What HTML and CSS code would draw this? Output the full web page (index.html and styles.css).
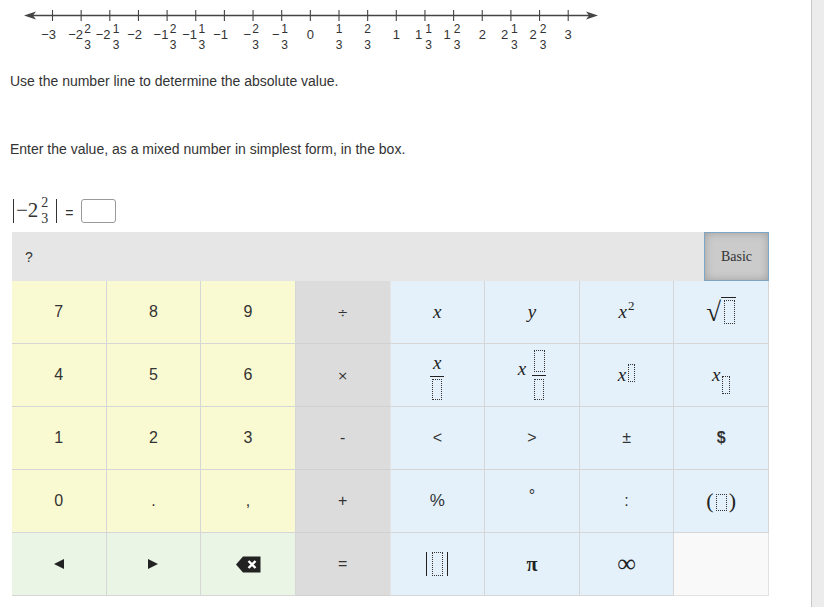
FILE: index.html
```html
<!DOCTYPE html>
<html>
<head>
<meta charset="utf-8">
<link rel="stylesheet" href="styles.css">
</head>
<body>
<div class="page">
  <div class="main">
    <svg class="nl" width="620" height="56" viewBox="0 0 620 56">
      <line class="ax" x1="30" y1="15.5" x2="592" y2="15.5"/>
      <path class="ah" d="M24 15.5 L36 11.5 L33 15.5 L36 19.5 Z"/>
      <path class="ah" d="M598 15.5 L586 11.5 L589 15.5 L586 19.5 Z"/>
      <g class="tk">
        <line x1="52.5" y1="10" x2="52.5" y2="21"/>
        <line x1="81.15" y1="10" x2="81.15" y2="21"/>
        <line x1="109.8" y1="10" x2="109.8" y2="21"/>
        <line x1="138.45" y1="10" x2="138.45" y2="21"/>
        <line x1="167.1" y1="10" x2="167.1" y2="21"/>
        <line x1="195.75" y1="10" x2="195.75" y2="21"/>
        <line x1="224.4" y1="10" x2="224.4" y2="21"/>
        <line x1="253.05" y1="10" x2="253.05" y2="21"/>
        <line x1="281.7" y1="10" x2="281.7" y2="21"/>
        <line x1="310.35" y1="10" x2="310.35" y2="21"/>
        <line x1="339" y1="10" x2="339" y2="21"/>
        <line x1="367.65" y1="10" x2="367.65" y2="21"/>
        <line x1="396.3" y1="10" x2="396.3" y2="21"/>
        <line x1="424.95" y1="10" x2="424.95" y2="21"/>
        <line x1="453.6" y1="10" x2="453.6" y2="21"/>
        <line x1="482.25" y1="10" x2="482.25" y2="21"/>
        <line x1="510.9" y1="10" x2="510.9" y2="21"/>
        <line x1="539.55" y1="10" x2="539.55" y2="21"/>
        <line x1="568.2" y1="10" x2="568.2" y2="21"/>
      </g>
      <g class="lb">
        <text class="i e" x="56" y="38.5">−3</text>

        <text class="i e" x="83" y="38.5">−2</text>
        <text class="f m" x="87.7" y="33">2</text><text class="f m" x="87.7" y="48.5">3</text>

        <text class="i e" x="110.6" y="38.5">−2</text>
        <text class="f m" x="116.1" y="33">1</text><text class="f m" x="116.1" y="48.5">3</text>

        <text class="i e" x="142" y="38.5">−2</text>

        <text class="i e" x="168.4" y="38.5">−1</text>
        <text class="f m" x="173.1" y="33">2</text><text class="f m" x="173.1" y="48.5">3</text>

        <text class="i e" x="197.1" y="38.5">−1</text>
        <text class="f m" x="201.8" y="33">1</text><text class="f m" x="201.8" y="48.5">3</text>

        <text class="i e" x="228" y="38.5">−1</text>

        <text class="i e" x="251" y="38.5">−</text>
        <text class="f m" x="255.5" y="33">2</text><text class="f m" x="255.5" y="48.5">3</text>

        <text class="i e" x="279.7" y="38.5">−</text>
        <text class="f m" x="284.7" y="33">1</text><text class="f m" x="284.7" y="48.5">3</text>

        <text class="i m" x="310.35" y="38.5">0</text>

        <text class="f m" x="339" y="33">1</text><text class="f m" x="339" y="48.5">3</text>

        <text class="f m" x="367.65" y="33">2</text><text class="f m" x="367.65" y="48.5">3</text>

        <text class="i m" x="396.3" y="38.5">1</text>

        <text class="i e" x="422.3" y="38.5">1</text>
        <text class="f m" x="428.5" y="33">1</text><text class="f m" x="428.5" y="48.5">3</text>

        <text class="i e" x="450.8" y="38.5">1</text>
        <text class="f m" x="457" y="33">2</text><text class="f m" x="457" y="48.5">3</text>

        <text class="i m" x="482.25" y="38.5">2</text>

        <text class="i e" x="508.2" y="38.5">2</text>
        <text class="f m" x="514.4" y="33">1</text><text class="f m" x="514.4" y="48.5">3</text>

        <text class="i e" x="536.8" y="38.5">2</text>
        <text class="f m" x="543" y="33">2</text><text class="f m" x="543" y="48.5">3</text>

        <text class="i m" x="568.2" y="38.5">3</text>
      </g>
    </svg>

    <p class="q q1">Use the number line to determine the absolute value.</p>
    <p class="q q2">Enter the value, as a mixed number in simplest form, in the box.</p>

    <div class="expr">
      <span class="absbar"></span>
      <span class="mn">−2</span>
      <span class="efrac"><span>2</span><span>3</span></span>
      <span class="absbar absbar-r"></span>
      <span class="eq">=</span>
      <span class="ansbox"></span>
    </div>

    <div class="pad">
      <div class="padhead">
        <span class="help">?</span>
        <span class="basic">Basic</span>
      </div>
      <div class="keys">
        <div class="k y">7</div>
        <div class="k y">8</div>
        <div class="k y">9</div>
        <div class="k g op">÷</div>
        <div class="k b"><span class="mi">x</span></div>
        <div class="k b"><span class="mi">y</span></div>
        <div class="k b"><span class="mi">x</span><span class="sup2">2</span></div>
        <div class="k b"><span class="sqrt">√</span><span class="rad"><span class="ph ph-sq"></span></span></div>

        <div class="k y">4</div>
        <div class="k y">5</div>
        <div class="k y">6</div>
        <div class="k g op">×</div>
        <div class="k b"><span class="kfrac"><span class="mi kfx">x</span><span class="fbar fbar-a"></span><span class="ph ph-fd"></span></span></div>
        <div class="k b"><span class="mi mix">x</span><span class="kfrac"><span class="ph ph-fu"></span><span class="fbar fbar-b"></span><span class="ph ph-fd"></span></span></div>
        <div class="k b"><span class="mi">x</span><span class="ph ph-up"></span></div>
        <div class="k b"><span class="mi">x</span><span class="ph ph-dn"></span></div>

        <div class="k y">1</div>
        <div class="k y">2</div>
        <div class="k y">3</div>
        <div class="k g">-</div>
        <div class="k b">&lt;</div>
        <div class="k b">&gt;</div>
        <div class="k b pm">±</div>
        <div class="k b dol">$</div>

        <div class="k y">0</div>
        <div class="k y">.</div>
        <div class="k y">,</div>
        <div class="k g">+</div>
        <div class="k b pct">%</div>
        <div class="k b deg">°</div>
        <div class="k b">:</div>
        <div class="k b"><span class="par">(</span><span class="ph ph-par"></span><span class="par">)</span></div>

        <div class="k gr">
          <svg width="10" height="10" viewBox="0 0 10 10"><polygon points="0,5 10,0 10,10" fill="#222"/></svg>
        </div>
        <div class="k gr">
          <svg width="10" height="10" viewBox="0 0 10 10"><polygon points="10,5 0,0 0,10" fill="#222"/></svg>
        </div>
        <div class="k gr">
          <svg width="25" height="17" viewBox="0 0 25 17"><path d="M0 8.5 L7 0.5 H24.5 V16.5 H7 Z" fill="#222"/><path d="M12.5 5 L19.5 12 M19.5 5 L12.5 12" stroke="#fff" stroke-width="2.4"/></svg>
        </div>
        <div class="k g">=</div>
        <div class="k b"><span class="absk"><span class="ph ph-abs"></span></span></div>
        <div class="k b pi">π</div>
        <div class="k b inf">∞</div>
        <div class="k emp"></div>
      </div>
    </div>
  </div>
  <div class="scroll"></div>
</div>
</body>
</html>
```

FILE: styles.css
```css
* { box-sizing: border-box; }
html, body { margin: 0; padding: 0; background: #fff; }
body {
  font-family: "Liberation Sans", Arial, sans-serif;
  color: #333;
  width: 824px;
  height: 607px;
  overflow: hidden;
}
.page { display: flex; height: 607px; }
.main { flex: 1; }
.scroll { width: 13px; border-left: 1px solid #c9c9c9; background: #ececec; }

/* number line */
.nl { display: block; }
.nl .ax { stroke: #444; stroke-width: 1.3; }
.nl .ah { fill: #444; }
.nl .tk line { stroke: #444; stroke-width: 1.1; }
.nl .lb text { font-family: "Liberation Sans", Arial, sans-serif; fill: #333; }
.nl .i { font-size: 13px; }
.nl .f { font-size: 12px; }
.nl .e { text-anchor: end; }
.nl .m { text-anchor: middle; }

/* question text */
.q { margin: 0 0 0 10px; font-size: 14px; line-height: 17px; color: #333; }
.q1 { margin-top: 17px; }
.q2 { margin-top: 51px; }

/* expression */
.expr {
  margin: 40px 0 0 13px;
  height: 25px;
  display: flex;
  align-items: center;
  color: #333;
}
.absbar { width: 0; height: 24px; border-left: 1.5px solid #333; }
.absbar-r { margin-left: 8px; }
.mn {
  font-family: "Liberation Serif", "Times New Roman", serif;
  font-size: 21px;
  line-height: 25px;
  margin-left: 2px;
}
.efrac {
  display: flex;
  flex-direction: column;
  align-items: center;
  gap: 6px;
  margin-left: 3px;
  font-family: "Liberation Serif", "Times New Roman", serif;
  font-size: 14px;
  line-height: 10px;
}
.eq { font-size: 14px; line-height: 25px; margin: 5px 0 0 8px; }
.ansbox {
  width: 35px;
  height: 24px;
  margin-left: 7px;
  border: 1px solid #9a9a9a;
  border-radius: 3px;
  background: #fff;
}

/* keypad */
.pad { margin: 9px 0 0 12px; width: 757px; }
.padhead {
  height: 49px;
  background: #e6e6e6;
  display: flex;
  justify-content: space-between;
  align-items: center;
}
.help { padding-left: 13px; font-size: 14px; color: #333; }
.basic {
  width: 65px;
  height: 49px;
  display: flex;
  align-items: center;
  justify-content: center;
  border: 1px solid #7ea5c3;
  background: #cbcbcb;
  box-shadow: inset 0 0 9px rgba(0, 0, 0, 0.22);
  font-family: "Liberation Serif", "Times New Roman", serif;
  font-size: 14px;
  color: #333;
}
.keys {
  display: grid;
  grid-template-columns: repeat(8, 1fr);
  grid-auto-rows: 63px;
}
.k {
  display: flex;
  align-items: center;
  justify-content: center;
  border-right: 1px solid #d6d6d6;
  border-bottom: 1px solid #d6d6d6;
  font-size: 16px;
  color: #333;
}
.y { background: #fafad2; }
.g { background: #dcdcdc; border-right-color: #e4e4e4; border-bottom-color: #d0d0d0; }
.b { background: #e4f1fb; }
.gr { background: #eaf5e6; }
.emp { background: #f9f9f9; border-color: #e2e2e2; }
.op { font-family: "DejaVu Sans", sans-serif; font-size: 13px; }

.mi {
  font-family: "Liberation Serif", "Times New Roman", serif;
  font-style: italic;
  font-size: 19px;
  line-height: 16px;
  color: #222;
}
.sup2 {
  font-family: "Liberation Serif", "Times New Roman", serif;
  font-size: 13px;
  line-height: 13px;
  margin: -14px 0 0 1px;
  color: #222;
}
.ph {
  display: inline-block;
  border: 1px dotted #333;
  flex: none;
}
.sqrt {
  font-family: "Liberation Serif", "Times New Roman", serif;
  font-size: 27px;
  line-height: 26px;
  color: #222;
  align-self: center;
}
.rad { border-top: 1.5px solid #222; padding: 2px 1px 0 3px; margin-top: -4px; display: flex; }
.ph-sq { width: 11px; height: 24px; }

.kfrac { display: flex; flex-direction: column; align-items: center; }
.kfx { margin-top: 4px; }
.fbar { height: 0; border-top: 1.2px solid #222; width: 14px; }
.fbar-a { margin: 5px 0 2px; }
.fbar-b { margin: 2.5px 0 3px; }
.ph-fd { width: 10px; height: 21px; }
.ph-fu { width: 11px; height: 22px; }
.mix { padding-bottom: 12px; margin-right: 6px; }
.ph-up { width: 7px; height: 18px; margin: -4px 0 0 2px; }
.ph-dn { width: 8px; height: 18px; margin: 20px 0 0 2px; }

.pm { font-size: 16px; }
.dol { font-weight: bold; }
.pct { font-size: 17px; }
.deg { padding-bottom: 10px; }
.par {
  font-family: "Liberation Serif", "Times New Roman", serif;
  font-size: 22px;
  line-height: 22px;
  color: #222;
}
.ph-par { width: 11px; height: 17px; margin: 2px 2px 0; }
.absk {
  display: flex;
  border-left: 1px solid #222;
  border-right: 1px solid #222;
  padding: 0 4px 0 5px;
}
.ph-abs { width: 11px; height: 24px; }
.pi {
  font-family: "Liberation Serif", "Times New Roman", serif;
  font-weight: bold;
  font-size: 20px;
  color: #222;
}
.inf {
  font-family: "Liberation Serif", "Times New Roman", serif;
  font-size: 26px;
  color: #222;
}
```
